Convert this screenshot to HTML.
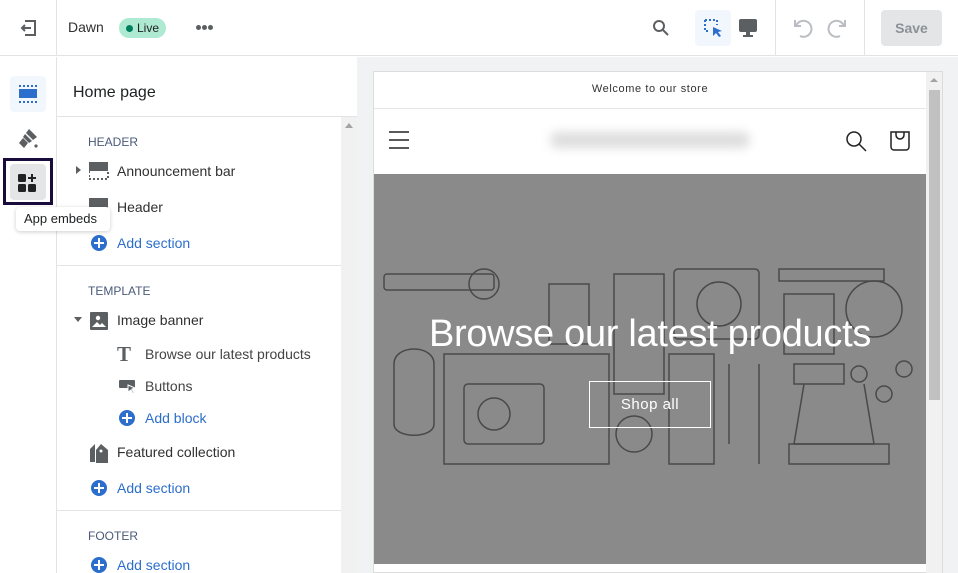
<!DOCTYPE html>
<html><head><style>
*{margin:0;padding:0;box-sizing:border-box}
body{width:958px;height:573px;overflow:hidden;background:#fff;font-family:"Liberation Sans",sans-serif;position:relative;color:#202223}
.a{position:absolute}
.t{font-size:14px;color:#303030}
.blue{color:#2c6ecb}
.sec{font-size:12px;color:#4a5a7a}
.plus{width:16px;height:16px;border-radius:50%;background:#2c6ecb;position:absolute}
.plus:before{content:"";position:absolute;left:3px;top:7px;width:10px;height:2px;background:#fff}
.plus:after{content:"";position:absolute;left:7px;top:3px;width:2px;height:10px;background:#fff}
.dot{position:absolute;width:5px;height:5px;border-radius:50%;background:#5c5f62;top:25px}
</style></head><body>
<div class="a" style="left:0;top:0;width:958px;height:56px;border-bottom:1px solid #e1e3e5"></div>
<div class="a" style="left:56px;top:0;width:1px;height:56px;background:#e1e3e5"></div>
<svg class="a" style="left:19px;top:19px" width="18" height="18" viewBox="0 0 18 18" fill="none" stroke="#5c5f62" stroke-width="2"><path d="M6 2h10v14H6"/><path d="M12 9H3M6 6L3 9l3 3"/></svg>
<div class="a t" style="left:68px;top:19px;font-size:14px">Dawn</div>
<div class="a" style="left:119px;top:18px;width:47px;height:20px;border-radius:10px;background:#aee9d1"></div>
<div class="a" style="left:126px;top:25px;width:7px;height:7px;border-radius:50%;background:#007f5f"></div>
<div class="a" style="left:137px;top:21px;font-size:12px;color:#202223">Live</div>
<div class="dot" style="left:196px"></div><div class="dot" style="left:202px"></div><div class="dot" style="left:208px"></div>
<svg class="a" style="left:652px;top:19px" width="18" height="18" viewBox="0 0 18 18" fill="none" stroke="#5c5f62" stroke-width="2"><circle cx="7" cy="7" r="5"/><path d="M11 11l5 5"/></svg>
<div class="a" style="left:695px;top:10px;width:36px;height:36px;border-radius:4px;background:#f2f7fe"></div>
<svg class="a" style="left:704px;top:19px" width="20" height="20" viewBox="0 0 20 20"><path d="M1 1h12v5M1 1v11h5" fill="none" stroke="#2c6ecb" stroke-width="2" stroke-dasharray="2 2"/><path d="M9 8l9 4-4 1 3 4-2 1-3-4-3 3z" fill="#2c6ecb"/></svg>
<svg class="a" style="left:739px;top:19px" width="18" height="18" viewBox="0 0 18 18"><rect x="0" y="0" width="18" height="13" rx="2" fill="#5c5f62"/><rect x="7" y="13" width="4" height="3" fill="#5c5f62"/><rect x="4" y="16" width="10" height="2" fill="#5c5f62"/></svg>
<div class="a" style="left:775px;top:0;width:1px;height:56px;background:#e1e3e5"></div>
<div class="a" style="left:864px;top:0;width:1px;height:56px;background:#e1e3e5"></div>
<svg class="a" style="left:791px;top:16px" width="22" height="22" viewBox="0 0 22 22" fill="none" stroke="#babec3" stroke-width="2"><path d="M4 4v6h6"/><path d="M5 10a8 8 0 1 1 4 10"/></svg>
<svg class="a" style="left:827px;top:16px" width="22" height="22" viewBox="0 0 22 22" fill="none" stroke="#babec3" stroke-width="2"><path d="M18 4v6h-6"/><path d="M17 10a8 8 0 1 0-4 10"/></svg>
<div class="a" style="left:881px;top:10px;width:61px;height:36px;border-radius:4px;background:#e4e5e7;font-size:14px;font-weight:bold;color:#8c9196;text-align:center;line-height:36px">Save</div>
<div class="a" style="left:56px;top:57px;width:1px;height:516px;background:#e1e3e5"></div>
<div class="a" style="left:10px;top:76px;width:36px;height:36px;border-radius:4px;background:#f2f7fe"></div>
<svg class="a" style="left:18px;top:84px" width="20" height="20" viewBox="0 0 20 20"><rect x="1" y="5" width="18" height="9" fill="#2c6ecb"/><path d="M1 2h18M1 18h18" stroke="#2c6ecb" stroke-width="2" stroke-dasharray="2 2"/></svg>
<svg class="a" style="left:17px;top:127px" width="22" height="22" viewBox="0 0 22 22" fill="#5c5f62"><path d="M12 2l8 8-4 3-7-7z"/><path d="M8 7l7 7-3 2-6-6z"/><path d="M6 11l5 5-4 5-5-5z"/><circle cx="19" cy="19" r="1.6"/></svg>
<div class="a" style="left:3px;top:158px;width:50px;height:47px;border:3px solid #1a0b3d"></div>
<div class="a" style="left:10px;top:164px;width:36px;height:36px;border-radius:4px;background:#e4e5e7"></div>
<svg class="a" style="left:18px;top:172px" width="20" height="20" viewBox="0 0 20 20" fill="#202223"><rect x="0" y="2" width="8" height="8" rx="1.5"/><rect x="0" y="12" width="8" height="8" rx="1.5"/><rect x="10" y="12" width="8" height="8" rx="1.5"/><path d="M13 2h2v3h3v2h-3v3h-2V7h-3V5h3z"/></svg>
<div class="a" style="left:57px;top:116px;width:300px;height:1px;background:#e1e3e5"></div>
<div class="a" style="left:73px;top:84px;font-size:16px;color:#202223">Home page</div>
<div class="a" style="left:341px;top:117px;width:16px;height:456px;background:#f1f1f1"></div>
<div class="a" style="left:345px;top:123px;width:0;height:0;border-left:4px solid transparent;border-right:4px solid transparent;border-bottom:5px solid #a3a3a3"></div>
<div class="a" style="left:357px;top:57px;width:601px;height:516px;background:#f1f2f3"></div>
<div class="a sec" style="left:88px;top:135px">HEADER</div>
<div class="a" style="left:76px;top:166px;border-top:4px solid transparent;border-bottom:4px solid transparent;border-left:5px solid #5c5f62"></div>
<svg class="a" style="left:89px;top:162px" width="20" height="18" viewBox="0 0 20 18"><rect x="0" y="0" width="19" height="9" fill="#5c5f62"/><path d="M0 9v8h19V9" fill="none" stroke="#5c5f62" stroke-width="2" stroke-dasharray="2 2"/></svg>
<div class="a t" style="left:117px;top:163px">Announcement bar</div>
<svg class="a" style="left:89px;top:198px" width="20" height="10"><rect width="19" height="10" fill="#5c5f62"/></svg>
<div class="a t" style="left:117px;top:199px">Header</div>
<div class="plus" style="left:91px;top:235px"></div>
<div class="a t blue" style="left:117px;top:235px">Add section</div>
<div class="a" style="left:57px;top:265px;width:284px;height:1px;background:#e1e3e5"></div>
<div class="a" style="left:16px;top:207px;width:94px;height:24px;background:#fff;border-radius:4px;box-shadow:0 1px 4px rgba(0,0,0,.2);font-size:13px;color:#202223;padding:4px 8px">App embeds</div>
<div class="a sec" style="left:88px;top:284px">TEMPLATE</div>
<div class="a" style="left:74px;top:317px;border-left:4px solid transparent;border-right:4px solid transparent;border-top:5px solid #5c5f62"></div>
<svg class="a" style="left:90px;top:312px" width="18" height="18" viewBox="0 0 18 18"><rect width="18" height="18" rx="1" fill="#5c5f62"/><circle cx="8" cy="6" r="2.2" fill="#fff"/><path d="M2 15l5-5 3 3 2-2 4 4z" fill="#fff"/></svg>
<div class="a t" style="left:117px;top:312px">Image banner</div>
<div class="a" style="left:117px;top:342px;font-family:'Liberation Serif',serif;font-weight:bold;font-size:21px;color:#5c5f62">T</div>
<div class="a t" style="left:145px;top:346px;color:#444">Browse our latest products</div>
<svg class="a" style="left:119px;top:380px" width="18" height="15" viewBox="0 0 18 15"><rect x="0" y="0" width="16" height="8" rx="1" fill="#5c5f62"/><path d="M9 5l7 3-3 1 2 4-1 1-2-4-3 2z" fill="#5c5f62" stroke="#fff" stroke-width="1"/></svg>
<div class="a t" style="left:145px;top:378px;color:#444">Buttons</div>
<div class="plus" style="left:119px;top:410px"></div>
<div class="a t blue" style="left:145px;top:410px">Add block</div>
<svg class="a" style="left:89px;top:443px" width="20" height="20" viewBox="0 0 20 20" fill="#5c5f62"><path d="M6 1L1 6v13h5z"/><path d="M12 1l-5 6v13h12V7z"/><circle cx="12" cy="8" r="1.5" fill="#fff"/></svg>
<div class="a t" style="left:117px;top:444px">Featured collection</div>
<div class="plus" style="left:91px;top:480px"></div>
<div class="a t blue" style="left:117px;top:480px">Add section</div>
<div class="a" style="left:57px;top:510px;width:284px;height:1px;background:#e1e3e5"></div>
<div class="a sec" style="left:88px;top:529px">FOOTER</div>
<div class="plus" style="left:91px;top:557px"></div>
<div class="a t blue" style="left:117px;top:557px">Add section</div>
<div class="a" style="left:373px;top:71px;width:570px;height:502px;background:#fff;border:1px solid #dcdcdc"></div>
<div class="a" style="left:926px;top:72px;width:16px;height:501px;background:#f1f1f1"></div>
<div class="a" style="left:929px;top:90px;width:11px;height:310px;background:#c1c1c1"></div>
<div class="a" style="left:930px;top:78px;border-left:4px solid transparent;border-right:4px solid transparent;border-bottom:4px solid #a3a3a3"></div>
<div class="a" style="left:374px;top:83px;width:552px;text-align:center;font-size:11px;letter-spacing:.6px;color:#333">Welcome to our store</div>
<div class="a" style="left:374px;top:108px;width:552px;height:1px;background:#e6e6e6"></div>
<svg class="a" style="left:389px;top:131px" width="20" height="18"><path d="M0 1h20M0 9h20M0 17h20" stroke="#222" stroke-width="1.5"/></svg>
<div class="a" style="left:550px;top:132px;width:200px;height:16px;background:#ddd;filter:blur(5px);border-radius:8px"></div>
<svg class="a" style="left:845px;top:130px" width="22" height="22" fill="none" stroke="#222" stroke-width="1.5"><circle cx="9" cy="9" r="7"/><path d="M14 14l7 7"/></svg>
<svg class="a" style="left:889px;top:129px" width="22" height="22" fill="none" stroke="#222" stroke-width="1.5"><path d="M2 3h18v15a3 3 0 0 1-3 3H5a3 3 0 0 1-3-3z"/><path d="M7 3v3a4 4 0 0 0 8 0V3"/></svg>
<div class="a" style="left:374px;top:174px;width:552px;height:390px;background:#8a8a8a;overflow:hidden">
<svg width="552" height="390" fill="none" stroke="#3a3a3a" stroke-width="1.5" opacity=".8">
<rect x="10" y="100" width="110" height="16" rx="3"/><circle cx="110" cy="110" r="15"/>
<rect x="175" y="110" width="40" height="60"/><rect x="240" y="100" width="50" height="120"/>
<rect x="300" y="95" width="85" height="70" rx="4"/><circle cx="345" cy="130" r="22"/>
<rect x="405" y="95" width="105" height="12"/><circle cx="500" cy="135" r="28"/>
<rect x="410" y="120" width="50" height="60"/>
<path d="M20 190c0-20 40-20 40 0v60c0 15-40 15-40 0z"/>
<rect x="70" y="180" width="165" height="110"/><rect x="90" y="210" width="80" height="60" rx="4"/><circle cx="120" cy="240" r="16"/>
<circle cx="260" cy="260" r="18"/><rect x="295" y="180" width="45" height="110"/>
<path d="M355 190v80M385 190v100"/>
<rect x="420" y="190" width="50" height="20"/><path d="M430 210l-10 60h80l-10-60"/><rect x="415" y="270" width="100" height="20"/>
<circle cx="485" cy="200" r="8"/><circle cx="510" cy="220" r="8"/><circle cx="530" cy="195" r="8"/>
</svg></div>
<div class="a" style="left:374px;top:313px;width:552px;text-align:center;font-size:38px;letter-spacing:-0.3px;color:#fff">Browse our latest products</div>
<div class="a" style="left:589px;top:381px;width:122px;height:47px;border:1px solid #fff;color:#fff;font-size:15px;text-align:center;line-height:45px;letter-spacing:.5px">Shop all</div>
</body></html>
